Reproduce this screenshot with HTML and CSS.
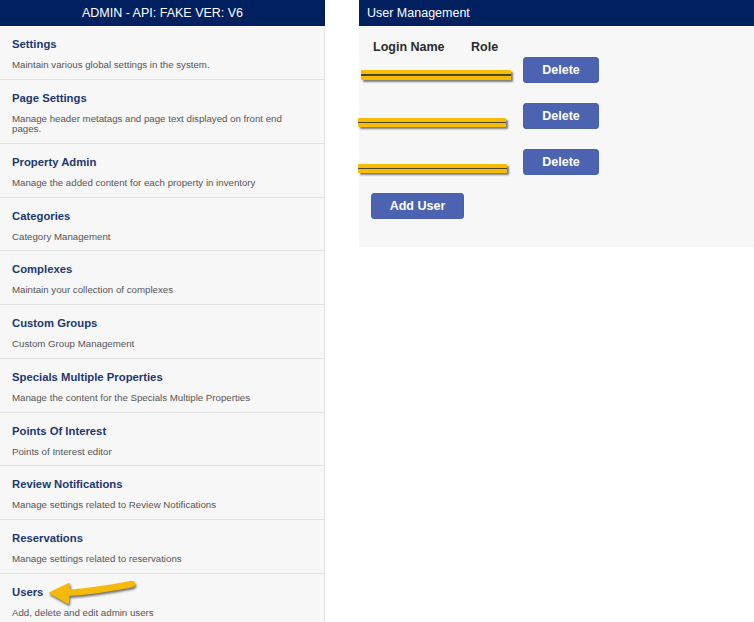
FILE: index.html
```html
<!DOCTYPE html>
<html lang="en">
<head>
    <meta charset="UTF-8">
    <meta name="viewport" content="width=device-width, initial-scale=1.0">
    <title>Admin - User Management</title>
    <link rel="stylesheet" href="styles.css">
</head>
<body>
    <div class="page">
        <aside class="admin-menu">
            <div class="menu-header">ADMIN - API: FAKE VER: V6</div>
            <ul class="menu-list">
                <li class="menu-item">
                    <a class="menu-title" href="#">Settings</a>
                    <p class="menu-desc">Maintain various global settings in the system.</p>
                </li>
                <li class="menu-item">
                    <a class="menu-title" href="#">Page Settings</a>
                    <p class="menu-desc">Manage header metatags and page text displayed on front end pages.</p>
                </li>
                <li class="menu-item">
                    <a class="menu-title" href="#">Property Admin</a>
                    <p class="menu-desc">Manage the added content for each property in inventory</p>
                </li>
                <li class="menu-item">
                    <a class="menu-title" href="#">Categories</a>
                    <p class="menu-desc">Category Management</p>
                </li>
                <li class="menu-item">
                    <a class="menu-title" href="#">Complexes</a>
                    <p class="menu-desc">Maintain your collection of complexes</p>
                </li>
                <li class="menu-item">
                    <a class="menu-title" href="#">Custom Groups</a>
                    <p class="menu-desc">Custom Group Management</p>
                </li>
                <li class="menu-item">
                    <a class="menu-title" href="#">Specials Multiple Properties</a>
                    <p class="menu-desc">Manage the content for the Specials Multiple Properties</p>
                </li>
                <li class="menu-item">
                    <a class="menu-title" href="#">Points Of Interest</a>
                    <p class="menu-desc">Points of Interest editor</p>
                </li>
                <li class="menu-item">
                    <a class="menu-title" href="#">Review Notifications</a>
                    <p class="menu-desc">Manage settings related to Review Notifications</p>
                </li>
                <li class="menu-item">
                    <a class="menu-title" href="#">Reservations</a>
                    <p class="menu-desc">Manage settings related to reservations</p>
                </li>
                <li class="menu-item">
                    <a class="menu-title" href="#">Users</a>
                    <p class="menu-desc">Add, delete and edit admin users</p>
                    <!-- pointer drawn on the screenshot -->
                    <svg class="pointer" width="92" height="34" viewBox="0 0 92 34">
                        <path d="M19 17 Q50 15 85 8" fill="none" stroke="#f5b90a" stroke-width="6.5" stroke-linecap="round"/>
                        <polygon points="3,17 22,8 21,27" fill="#f5b90a" stroke="#f5b90a" stroke-width="2" stroke-linejoin="round"/>
                    </svg>
                </li>
            </ul>
        </aside>

        <section class="user-panel">
            <div class="panel-header">User Management</div>
            <div class="user-table">
                <div class="user-head">
                    <span>Login Name</span>
                    <span>Role</span>
                </div>
                <div class="user-row">
                    <span class="cell"></span>
                    <span class="cell"></span>
                    <button type="button" class="btn">Delete</button>
                    <span class="redacted redacted-1"></span>
                </div>
                <div class="user-row">
                    <span class="cell"></span>
                    <span class="cell"></span>
                    <button type="button" class="btn">Delete</button>
                    <span class="redacted redacted-2"></span>
                </div>
                <div class="user-row">
                    <span class="cell"></span>
                    <span class="cell"></span>
                    <button type="button" class="btn">Delete</button>
                    <span class="redacted redacted-3"></span>
                </div>
            </div>
            <button type="button" class="btn btn-add">Add User</button>
        </section>
    </div>
</body>
</html>
```

FILE: styles.css
```css
body {
    font-family: 'Liberation Sans', Arial, sans-serif;
    background-color: #fff;
    margin: 0;
    padding: 0;
}

.page {
    display: flex;
    align-items: flex-start;
}

/* left menu */
.admin-menu {
    width: 325px;
    flex-shrink: 0;
    background-color: #f7f7f7;
}

.menu-header {
    background-color: #002060;
    color: #fff;
    height: 26px;
    line-height: 26px;
    font-size: 12.5px;
    text-align: center;
}

.menu-list {
    list-style: none;
    margin: 0;
    padding: 0;
    border-right: 1px solid #e4e4e4;
}

.menu-item {
    position: relative;
    padding: 11px 22px 8.5px 12px;
    border-bottom: 1px solid #e2e2e2;
}

.menu-title {
    display: block;
    color: #1c3771;
    font-size: 11.3px;
    font-weight: bold;
    line-height: 14px;
    text-decoration: none;
}

.menu-desc {
    margin: 9px 0 0 0;
    color: #555;
    font-size: 9.7px;
    line-height: 10.25px;
}

.pointer {
    position: absolute;
    left: 47px;
    top: 2px;
    filter: drop-shadow(1px 2px 1px rgba(0, 0, 0, 0.55));
}

/* user management */
.user-panel {
    flex: 1;
    margin-left: 34px;
    background-color: #f7f7f7;
    padding-bottom: 28px;
}

.panel-header {
    background-color: #002060;
    color: #fff;
    height: 26px;
    line-height: 26px;
    font-size: 12.5px;
    padding-left: 8px;
}

.user-table {
    display: flex;
    flex-direction: column;
    gap: 19.75px;
    padding: 14px 0 0 12px;
}

.user-head,
.user-row {
    display: grid;
    grid-template-columns: 98px 52px auto;
    align-items: start;
}

.user-head {
    height: 15px;
    line-height: 15px;
    font-size: 12.5px;
    font-weight: bold;
    color: #2b2b2b;
    margin-bottom: -17.75px;
}

.user-head span {
    padding-left: 2px;
}

.user-row {
    position: relative;
    height: 26px;
}

.btn {
    font-family: 'Liberation Sans', Arial, sans-serif;
    background-color: #4b63b1;
    color: #fff;
    border: 1px solid #4a61ad;
    border-radius: 3px;
    font-size: 12.5px;
    font-weight: bold;
    height: 26px;
    padding: 0;
    cursor: pointer;
}

.user-row .btn {
    width: 76px;
    margin-left: 2px;
}

.btn-add {
    display: block;
    width: 93px;
    margin: 18.5px 0 0 12px;
}

/* marker strokes over the hidden names */
.redacted {
    position: absolute;
    height: 10px;
    background: linear-gradient(#f7bb00 0, #f7bb00 45%, #4a4636 45%, #4a4636 58%, #f7bb00 58%);
    box-shadow: 2px 2px 2px rgba(0, 0, 0, 0.5);
    border-radius: 1px;
}

.redacted-1 {
    left: -10px;
    top: 13px;
    width: 150px;
}

.redacted-2 {
    left: -13px;
    top: 15.5px;
    width: 148px;
    height: 9px;
}

.redacted-3 {
    left: -13px;
    top: 15.5px;
    width: 149px;
    height: 9px;
}
```
